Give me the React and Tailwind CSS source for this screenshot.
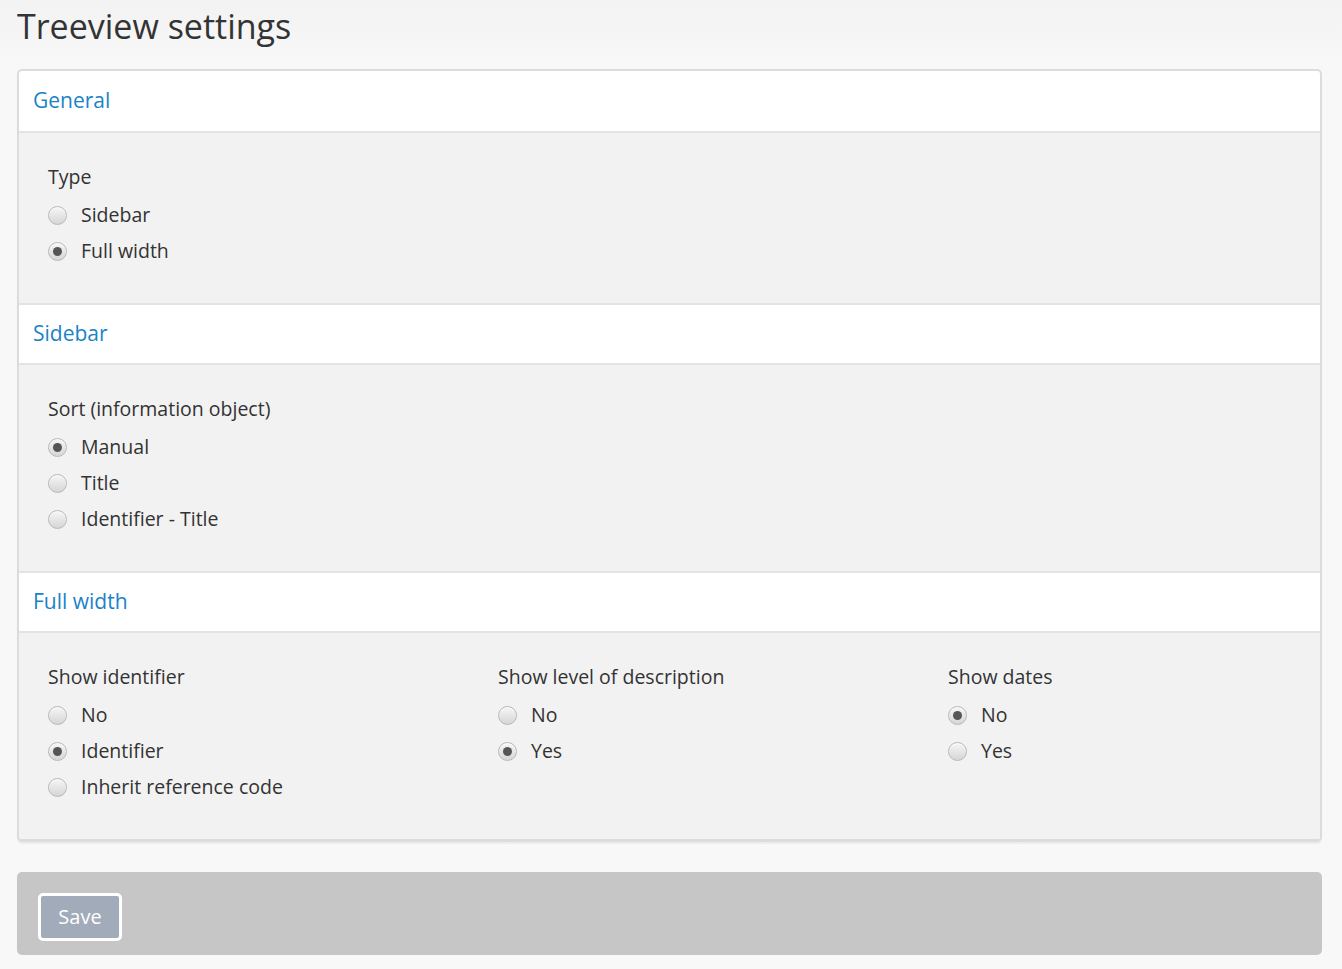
import { useState } from "react";

const FONT = { fontFamily: '"Open Sans", "Noto Sans", sans-serif' };

function Radio({ label, checked, onClick }) {
  return (
    <label className="flex items-center h-[36px] cursor-pointer" onClick={onClick}>
      <span className="w-[19px] h-[19px] rounded-full border border-[#b8b8b8] bg-gradient-to-b from-[#f6f6f6] to-[#d6d6d6] flex items-center justify-center shadow-[inset_0_1px_1px_rgba(255,255,255,0.8)]">
        {checked && <span className="w-[9px] h-[9px] rounded-full bg-[#555]" />}
      </span>
      <span className="ml-[14px] text-[19.5px] text-[#333]">{label}</span>
    </label>
  );
}

function Group({ label, options, value, onChange }) {
  return (
    <div>
      <div className="text-[19.5px] text-[#333] leading-[28px] mb-[6px]">{label}</div>
      {options.map((o) => (
        <Radio key={o} label={o} checked={value === o} onClick={() => onChange(o)} />
      ))}
    </div>
  );
}

function Section({ title, first, children }) {
  return (
    <>
      <div
        className={
          "h-[62px] bg-white flex items-center px-[14px] border-b-2 border-[#e3e3e3] " +
          (first ? "rounded-t-[4px]" : "border-t-2")
        }
      >
        <span className="text-[21px] text-[#1a83c6]">{title}</span>
      </div>
      <div className="bg-[#f2f2f2] px-[29px] pt-[30px] pb-[34px]">{children}</div>
    </>
  );
}

export default function App() {
  const [type, setType] = useState("Full width");
  const [sort, setSort] = useState("Manual");
  const [ident, setIdent] = useState("Identifier");
  const [level, setLevel] = useState("Yes");
  const [dates, setDates] = useState("No");

  return (
    <div style={FONT} className="min-h-[969px] bg-gradient-to-b from-[#f2f2f2] to-[#f8f8f8] to-[60px] pl-[17px] pr-[20px] pt-[3px]">
      <h1 className="text-[34px] text-[#333] leading-[46px] mb-[20px]">Treeview settings</h1>

      <div className="border-2 border-b-[3px] border-[#dcdcdc] rounded-[5px] shadow-[0_2px_1px_rgba(0,0,0,0.05)] overflow-hidden">
        <Section title="General" first>
          <Group label="Type" options={["Sidebar", "Full width"]} value={type} onChange={setType} />
        </Section>
        <Section title="Sidebar">
          <Group
            label="Sort (information object)"
            options={["Manual", "Title", "Identifier - Title"]}
            value={sort}
            onChange={setSort}
          />
        </Section>
        <Section title="Full width">
          <div className="grid grid-cols-[450px_450px_1fr]">
            <Group
              label="Show identifier"
              options={["No", "Identifier", "Inherit reference code"]}
              value={ident}
              onChange={setIdent}
            />
            <Group label="Show level of description" options={["No", "Yes"]} value={level} onChange={setLevel} />
            <Group label="Show dates" options={["No", "Yes"]} value={dates} onChange={setDates} />
          </div>
        </Section>
      </div>

      <div className="mt-[30px] bg-[#c6c6c6] rounded-[5px] h-[83px] flex items-start pt-[21px] px-[21px]">
        <button className="w-[84px] h-[48px] border-[3px] border-white rounded-[5px] bg-[#a2abb9] text-white text-[20px]">
          Save
        </button>
      </div>
    </div>
  );
}
